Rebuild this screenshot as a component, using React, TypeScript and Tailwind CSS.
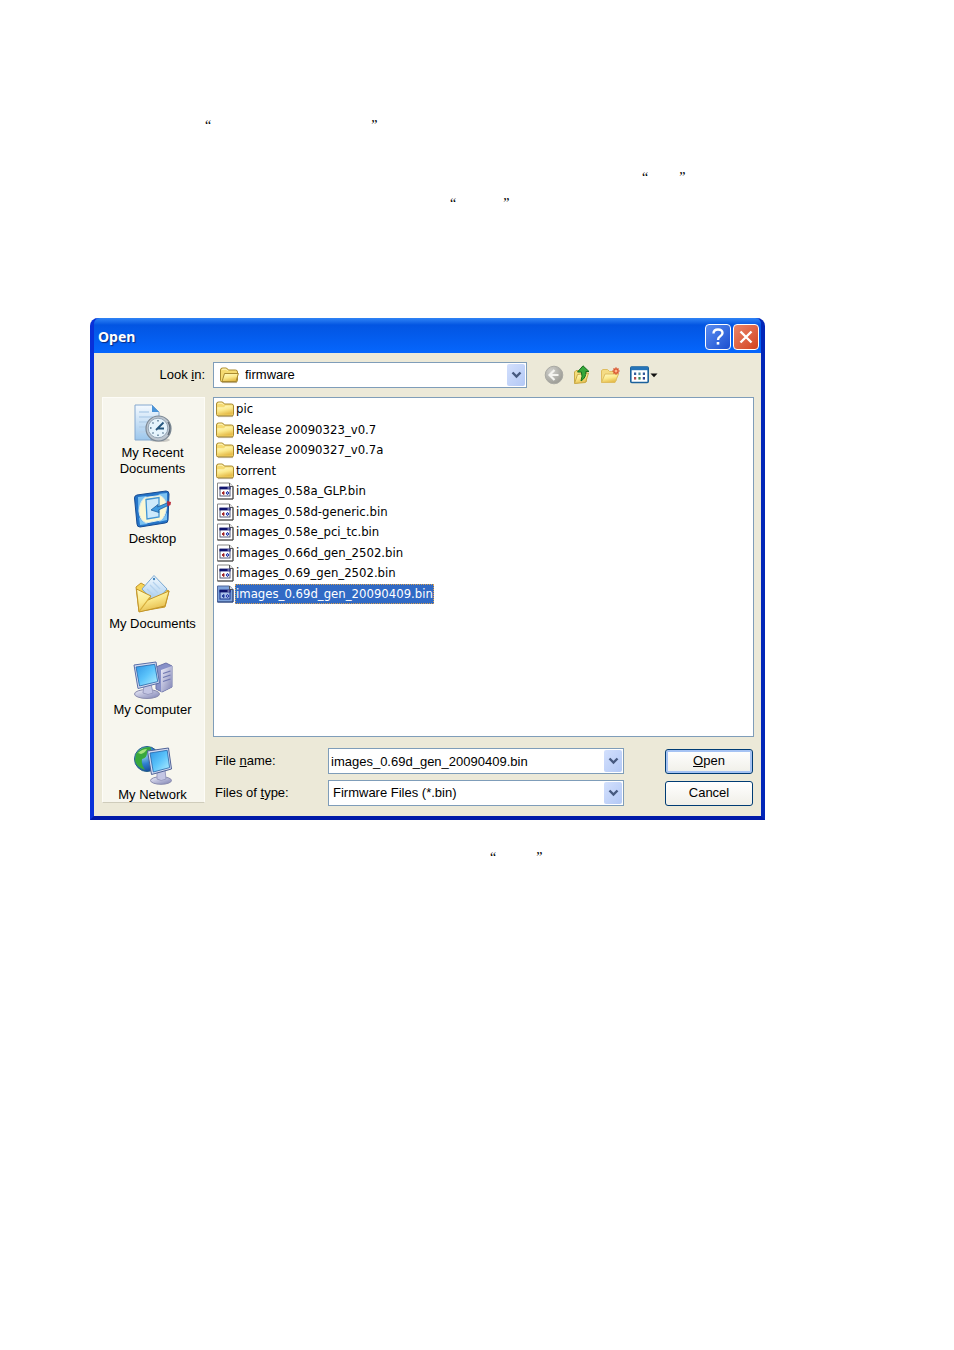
import { useState, type ReactNode } from 'react';
import clsx from 'clsx';

type Entry = { name: string; kind: 'folder' | 'file' };

const ENTRIES: Entry[] = [
  { name: 'pic', kind: 'folder' },
  { name: 'Release 20090323_v0.7', kind: 'folder' },
  { name: 'Release 20090327_v0.7a', kind: 'folder' },
  { name: 'torrent', kind: 'folder' },
  { name: 'images_0.58a_GLP.bin', kind: 'file' },
  { name: 'images_0.58d-generic.bin', kind: 'file' },
  { name: 'images_0.58e_pci_tc.bin', kind: 'file' },
  { name: 'images_0.66d_gen_2502.bin', kind: 'file' },
  { name: 'images_0.69_gen_2502.bin', kind: 'file' },
  { name: 'images_0.69d_gen_20090409.bin', kind: 'file' },
];

function Gradients() {
  return (
    <svg width="0" height="0" className="absolute" aria-hidden="true">
      <defs>
        <linearGradient id="gold" x1="0" y1="0" x2="0.4" y2="1">
          <stop offset="0" stopColor="#fffbc8" />
          <stop offset="0.55" stopColor="#fbe98c" />
          <stop offset="1" stopColor="#e6bd4c" />
        </linearGradient>
        <linearGradient id="screen" x1="0" y1="0" x2="1" y2="1">
          <stop offset="0" stopColor="#2f94e4" />
          <stop offset="0.5" stopColor="#5cc4fb" />
          <stop offset="1" stopColor="#b6f0ff" />
        </linearGradient>
        <linearGradient id="paper" x1="0" y1="0" x2="0" y2="1">
          <stop offset="0" stopColor="#f4faff" />
          <stop offset="1" stopColor="#9cc6ec" />
        </linearGradient>
        <linearGradient id="metal" x1="0" y1="0" x2="1" y2="1">
          <stop offset="0" stopColor="#eeeefa" />
          <stop offset="1" stopColor="#7f83b4" />
        </linearGradient>
        <radialGradient id="globe" cx="0.35" cy="0.3" r="0.8">
          <stop offset="0" stopColor="#a9e2f2" />
          <stop offset="0.5" stopColor="#2f80cf" />
          <stop offset="1" stopColor="#123f90" />
        </radialGradient>
        <radialGradient id="grayBall" cx="0.35" cy="0.3" r="0.8">
          <stop offset="0" stopColor="#d2d2ce" />
          <stop offset="1" stopColor="#96968f" />
        </radialGradient>
      </defs>
    </svg>
  );
}

function FolderIcon({ open = false }: { open?: boolean }) {
  return (
    <svg width="20" height="18" viewBox="0 0 20 18" className="shrink-0">
      <path d="M1.5 14.5V4Q1.5 2 3.5 2H7.5L9.5 4H16.5Q18.5 4 18.5 6V14.5Q18.5 15.8 17 15.8H3Q1.5 15.8 1.5 14.5Z" fill="#f5da72" stroke="#a98a30" />
      {open ? (
        <path d="M3 15.5L5.5 7.5H19.4L17 15.5Z" fill="url(#gold)" stroke="#a98a30" strokeLinejoin="round" />
      ) : (
        <path d="M2.3 14.8V7.2H9L10.5 5.5H17.7V14.8Z" fill="url(#gold)" />
      )}
      <path d="M3 4.2Q3 3.2 4 3.2H7L8.5 4.8" fill="none" stroke="#fff6c0" />
      <path d="M3 16.6H18" stroke="#8b7440" strokeOpacity="0.5" />
    </svg>
  );
}

function FileIcon({ selected }: { selected: boolean }) {
  return (
    <svg width="20" height="18" viewBox="0 0 20 18" className="shrink-0">
      <path d="M2.5 1H14.5L18 4.5V17H2.5Z" fill={selected ? '#7ea3dc' : '#fff'} stroke={selected ? '#4f6699' : '#888'} />
      <path d="M14.5 1V4.5H18" fill="#ddd" stroke="#555" />
      <path d="M18 4.5V17H2.5" fill="none" stroke={selected ? '#29427c' : '#444'} />
      <rect x="5" y="5.5" width="10" height="8.5" fill={selected ? '#a9c1ea' : '#fff'} stroke={selected ? '#16328a' : '#555a78'} />
      <path d="M4.5 6H15.5" stroke="#10146e" strokeWidth="2.8" />
      <path d="M12.5 6H14.5" stroke="#c9cbe8" />
      <path d="M9 9.5L7 11L9 12.5Z" fill={selected ? '#213a9a' : '#a12020'} stroke={selected ? '#213a9a' : '#a12020'} />
      <path d="M12.5 9.3L14 11L12.5 12.7L11 11Z" fill="#8ea2ec" stroke="#2536a0" />
    </svg>
  );
}

function RecentIcon() {
  return (
    <svg width="40" height="40" viewBox="0 0 40 40">
      <path d="M2 2H19L26 9V37H2Z" fill="url(#paper)" stroke="#84a8cf" />
      <path d="M19 2V9H26Z" fill="#4a94d8" />
      <path d="M6 9H16M6 14H20M6 19H15M6 24H13M6 29H14" stroke="#b4cfea" strokeWidth="1.5" />
      <ellipse cx="27" cy="37" rx="10" ry="2" fill="#777" opacity="0.35" />
      <circle cx="25.5" cy="25.5" r="12.5" fill="#bcc5cf" stroke="#7c8894" strokeWidth="1.2" />
      <circle cx="25" cy="25" r="9.8" fill="#e6f4fd" stroke="#96a6b6" />
      <path d="M23 27L30.5 19.5M24 25.5L31 25.5" stroke="#25567e" strokeWidth="1.8" />
      <path d="M25 17V18.5M25 31.5V33M17 25H18.5M19.5 19.5L20.5 20.5M19.5 30.5L20.5 29.5M30.5 30.5L29.5 29.5" stroke="#496b88" strokeWidth="1.3" />
      <path d="M35 19Q39 25 35 32" fill="none" stroke="#5c6875" strokeWidth="1.3" />
    </svg>
  );
}

function DesktopIcon() {
  return (
    <svg width="40" height="40" viewBox="0 0 40 40">
      <path d="M4 6L33 2Q36 2 36 5L35 31Q35 34 32 34L7 38Q4 38 4 35L1.5 9Q1.5 6.5 4 6Z" fill="#2474c8" stroke="#174c92" />
      <path d="M5 8L14 7Q6 14 5.5 25ZM25 5L34 4V15Q31 8 25 5ZM34 23V31L25 33Q32 29 34 23ZM6 28Q9 33 15 35L7 36Z" fill="#7cc3f2" />
      <path d="M12 8.5L27 6.5Q33 9 33.5 18Q33 27 28 31L13 34Q6.5 31 6 22Q7 12 12 8.5Z" fill="#fbf8d4" stroke="#dcecec" />
      <path d="M13 10.5L26 8.5V28L14 30Z" fill="#cdeafb" stroke="#4295d4" strokeWidth="1.3" />
      <path d="M18 21L25 15.5L24.5 18L34 14L35 16.5L25.5 21L26 23.5Z" fill="#3f9ae0" stroke="#1d5e9e" strokeWidth="0.8" />
      <path d="M34 12L38 13L37.5 16L34.5 17.5Z" fill="#b82d3c" />
    </svg>
  );
}

function DocumentsIcon() {
  return (
    <svg width="40" height="40" viewBox="0 0 40 40">
      <path d="M3 13L8 9L13 12L20 10L36 17L32 33L6 37.5Z" fill="#f6d458" stroke="#c39528" />
      <path d="M21 1.5L34 15L22 29L9 15Z" fill="url(#paper)" stroke="#79a8d3" />
      <path d="M20 8L27 15M17 11L25 19M14 15L21 22" stroke="#b4d2ee" strokeWidth="1.2" />
      <circle cx="21" cy="5" r="1.2" fill="#4185bd" />
      <path d="M3.5 15L18 22L15 26L36 17L32 32L6 38Z" fill="url(#gold)" stroke="#c39528" strokeLinejoin="round" />
      <path d="M6.5 37L17 23" stroke="#d6ac3a" strokeWidth="1.2" />
    </svg>
  );
}

function ComputerIcon() {
  return (
    <svg width="40" height="40" viewBox="0 0 40 40">
      <path d="M23 7L33 3L39 6V27L29 32L23 29Z" fill="#8790c8" stroke="#6b72a8" />
      <path d="M28 10L39 6V27L28 32Z" fill="url(#metal)" />
      <path d="M30 13.5L37.5 11M30 17.5L37.5 15M30 21.5L37.5 19" stroke="#6f77b0" strokeWidth="1.2" />
      <ellipse cx="14" cy="34" rx="12.5" ry="4.5" fill="url(#metal)" stroke="#8a8cae" />
      <path d="M11 25L18 24L20 33Q15 36 10 33Z" fill="#c4c6e4" stroke="#9a9cc0" />
      <path d="M1 5L23 2L26.5 23L5 28.5Z" fill="#d6dcf2" stroke="#5a6fa8" />
      <path d="M3 7L21.8 4.3L24.7 21.6L6.5 26Z" fill="url(#screen)" stroke="#2464a8" strokeWidth="0.8" />
    </svg>
  );
}

function NetworkIcon() {
  return (
    <svg width="40" height="40" viewBox="0 0 40 40">
      <circle cx="14" cy="14" r="12.5" fill="url(#globe)" stroke="#255f86" />
      <path d="M3 9Q8 1.5 17 2Q20 6 14 8Q14 13 9 14Q8 20 12 25Q3 22 2 15Z" fill="#39a83b" />
      <path d="M5 8Q9 4 14 4Q12 8 8 9Z" fill="#a7e37d" />
      <ellipse cx="28" cy="35.5" rx="10.5" ry="3.8" fill="url(#metal)" stroke="#8a8cae" />
      <path d="M24 26L32 25L33 34Q28 37 24 34Z" fill="#c4c6e4" stroke="#9a9cc0" />
      <path d="M14.5 6L35.5 3L38.5 24L18.5 29.5Z" fill="#d6dcf2" stroke="#4e6297" />
      <path d="M17 8L34.2 5.3L36.6 22.6L20.3 27Z" fill="url(#screen)" stroke="#2464a8" strokeWidth="0.8" />
    </svg>
  );
}

const PLACES: { label: string; icon: ReactNode }[] = [
  { label: 'My Recent Documents', icon: <RecentIcon /> },
  { label: 'Desktop', icon: <DesktopIcon /> },
  { label: 'My Documents', icon: <DocumentsIcon /> },
  { label: 'My Computer', icon: <ComputerIcon /> },
  { label: 'My Network', icon: <NetworkIcon /> },
];

// Drop-down arrow drawn over the right end of a combo box.
function Arrow() {
  return (
    <span className="pointer-events-none absolute inset-y-0.5 right-0.5 flex w-[18px] items-center justify-center rounded-xs bg-linear-to-br from-[#d3e0fd] to-[#b3c8f5]">
      <svg width="11" height="8" viewBox="0 0 11 8">
        <path d="M1.5 1.5L5.5 5.5L9.5 1.5" fill="none" stroke="#46597f" strokeWidth="2.4" />
      </svg>
    </span>
  );
}

function Toolbar() {
  return (
    <div className="flex w-[227px] shrink-0 items-center gap-2 pl-[17px]">
      <button type="button" aria-label="Back">
        <svg width="20" height="20" viewBox="0 0 20 20">
          <circle cx="10" cy="10" r="8.8" fill="url(#grayBall)" stroke="#aaaaa4" />
          <path d="M10.5 5L5.5 10L10.5 15M6 10H14.5" fill="none" stroke="#f4f4f0" strokeWidth="2.2" />
        </svg>
      </button>
      <button type="button" aria-label="Up one level">
        <svg width="20" height="20" viewBox="0 0 20 20">
          <path d="M2.5 18V7L4 5.5H8L9.5 7H14.5V16.5Z" fill="#f5dc78" stroke="#c9aa48" />
          <path d="M2.5 18.5L5.5 9.5L16.5 8L13.5 17.5Z" fill="url(#gold)" stroke="#c9aa48" />
          <path d="M11 0.8L17 6.5H13.8Q14.5 12.5 9 16Q10.8 11 9.3 7H5.5Z" fill="#36a83a" stroke="#176e1f" />
        </svg>
      </button>
      <button type="button" aria-label="Create new folder">
        <svg width="22" height="20" viewBox="0 0 22 20">
          <path d="M1.5 17V5.5L3 4.5H7.5L9.5 6.5H16V16Z" fill="#f5dc84" stroke="#dfbd60" />
          <path d="M1.5 17.5L5 9H18.5L15 17.5Z" fill="url(#gold)" stroke="#dfbd60" />
          <path d="M16 2.5V9.5M12.5 6H19.5M13.5 3.5L18.5 8.5M18.5 3.5L13.5 8.5" stroke="#d9532c" strokeWidth="1.6" />
          <circle cx="16" cy="6" r="1.5" fill="#ffb48a" />
        </svg>
      </button>
      <button type="button" aria-label="View menu">
        <svg width="28" height="20" viewBox="0 0 28 20">
          <rect x="0.8" y="2" width="17.4" height="15.5" rx="1" fill="#fff" stroke="#1b619b" strokeWidth="1.6" />
          <path d="M1 3.5H18" stroke="#2674b8" strokeWidth="3.4" />
          <path d="M4 8.8H6.2M12.8 8.8H15" stroke="#345c9c" strokeWidth="2.6" />
          <path d="M8.4 8.8H10.6" stroke="#4b8a9c" strokeWidth="2.6" />
          <path d="M4 13.3H6.2" stroke="#b14c4c" strokeWidth="2.6" />
          <path d="M8.4 13.3H10.6" stroke="#3a8752" strokeWidth="2.6" />
          <path d="M12.8 13.3H15" stroke="#31438c" strokeWidth="2.6" />
          <path d="M20.5 8.5H27.5L24 12.3Z" fill="#111" />
        </svg>
      </button>
    </div>
  );
}

const field = 'block h-[26px] w-full appearance-none border border-[#7f9db9] bg-white pr-6 outline-none';
const pushButton = 'h-[25px] w-[88px] rounded-[3px] border border-[#003c74] bg-linear-to-b from-white to-[#f0efe8]';

function OpenDialog() {
  const [selected, setSelected] = useState('images_0.69d_gen_20090409.bin');

  return (
    <section className="rounded-t-lg border-x-4 border-b-4 border-[#0831d9] border-r-[#0226b8] border-b-[#0019a8] bg-[#0855e4] text-[13px] text-black">
      <header className="flex h-[35px] items-center justify-between rounded-t-md bg-linear-to-b from-[#2f83f5] via-[#0355e2] via-20% to-[#0566fd] pr-0.5 pl-1">
        <h1 className="pt-0.5 font-['Noto_Sans'] text-sm font-bold text-white [text-shadow:1px_1px_1px_#0a2a80]">Open</h1>
        <div className="flex gap-0.5 pt-0.5">
          <button type="button" aria-label="Help" className="flex size-[26px] items-center justify-center rounded-[4px] border border-white bg-linear-to-br from-[#5a8cf0] to-[#1c4ed0]">
            <svg width="18" height="20" viewBox="0 0 18 20">
              <path d="M4.5 6.5Q4.5 2.5 9 2.5Q13.5 2.5 13.5 6Q13.5 8 11 9.5Q9 10.7 9 13" fill="none" stroke="#fff" strokeWidth="2.4" />
              <path d="M9 15V17.6" stroke="#fff" strokeWidth="2.6" />
            </svg>
          </button>
          <button type="button" aria-label="Close" className="flex size-[26px] items-center justify-center rounded-[4px] border border-white bg-linear-to-br from-[#ea8468] to-[#d2401c]">
            <svg width="16" height="16" viewBox="0 0 16 16">
              <path d="M2.5 2.5L13.5 13.5M13.5 2.5L2.5 13.5" stroke="#fff" strokeWidth="2.4" />
            </svg>
          </button>
        </div>
      </header>

      <div className="bg-[#ece9d8] pt-[9px] pr-[7px] pb-[10px] pl-2">
        <div className="flex items-center">
          <label htmlFor="look-in" className="w-[111px] shrink-0 pr-2 text-right">
            Look <u>i</u>n:
          </label>
          <div className="relative flex-1">
            <select id="look-in" className={clsx(field, 'pl-[31px]')}>
              <option>firmware</option>
            </select>
            <span className="pointer-events-none absolute top-1 left-1.5">
              <FolderIcon open />
            </span>
            <Arrow />
          </div>
          <Toolbar />
        </div>

        <div className="mt-[9px] flex gap-2">
          <nav className="h-[406px] w-[103px] shrink-0 overflow-hidden border border-[#fdfcf7] border-b-[#cfccbb] bg-[#f7f6ee]">
            <ul className="grid h-[433px] grid-rows-5 pt-[5px] pr-0.5">
              {PLACES.map((p) => (
                <li key={p.label}>
                  <button type="button" className="flex w-full flex-col items-center gap-0.5 px-1 leading-4">
                    {p.icon}
                    <span className={clsx(p.label === 'My Recent Documents' ? 'w-20' : 'whitespace-nowrap')}>{p.label}</span>
                  </button>
                </li>
              ))}
            </ul>
          </nav>

          <div className="min-w-0 flex-1">
            <div className="h-[340px] border border-[#7f9db9] bg-white py-px pl-px">
              <ul className="grid h-[205px] grid-rows-10 font-['DejaVu_Sans_Condensed','DejaVu_Sans',sans-serif]">
                {ENTRIES.map((e) => (
                  <li key={e.name} className="flex items-center">
                    <button type="button" onClick={() => setSelected(e.name)} className="flex items-center">
                      {e.kind === 'folder' ? <FolderIcon /> : <FileIcon selected={e.name === selected} />}
                      <span className={clsx('px-px leading-5', e.name === selected && 'bg-[#316ac5] text-white outline-1 -outline-offset-1 outline-dotted outline-[#d8a050]')}>
                        {e.name}
                      </span>
                    </button>
                  </li>
                ))}
              </ul>
            </div>

            <form className="mt-[11px] flex flex-col gap-1.5 pr-px" onSubmit={(ev) => ev.preventDefault()}>
              <div className="flex items-center">
                <label htmlFor="file-name" className="w-[115px] shrink-0 pl-0.5">
                  File <u>n</u>ame:
                </label>
                <div className="relative mr-[41px] flex-1">
                  <input id="file-name" value={selected} onChange={(ev) => setSelected(ev.target.value)} className={clsx(field, 'pl-0.5')} />
                  <Arrow />
                </div>
                <button type="submit" className={clsx(pushButton, 'shadow-[inset_0_0_0_2px_#a6c3f3]')}>
                  <u>O</u>pen
                </button>
              </div>
              <div className="flex items-center">
                <label htmlFor="file-type" className="w-[115px] shrink-0 pl-0.5">
                  Files of <u>t</u>ype:
                </label>
                <div className="relative mr-[41px] flex-1">
                  <select id="file-type" className={clsx(field, 'pl-1')}>
                    <option>Firmware Files (*.bin)</option>
                  </select>
                  <Arrow />
                </div>
                <button type="button" className={pushButton}>
                  Cancel
                </button>
              </div>
            </form>
          </div>
        </div>
      </div>
    </section>
  );
}

export default function App() {
  return (
    <main className="min-h-screen bg-white pt-[113px] font-['Liberation_Sans',Arial,sans-serif]">
      <Gradients />
      <div className="h-[205px] font-['Liberation_Serif',serif] text-sm leading-[26px] text-black">
        <p className="flex gap-40 pl-[205px]">
          <span>“</span>
          <span>”</span>
        </p>
        <p className="mt-[26px] flex gap-[31px] pl-[642px]">
          <span>“</span>
          <span>”</span>
        </p>
        <p className="flex gap-[47px] pl-[450px]">
          <span>“</span>
          <span>”</span>
        </p>
      </div>
      <div className="pr-[189px] pl-[90px]">
        <OpenDialog />
      </div>
      <p className="mt-[25px] flex gap-10 pl-[490px] font-['Liberation_Serif',serif] text-sm leading-[26px] text-black">
        <span>“</span>
        <span>”</span>
      </p>
    </main>
  );
}
